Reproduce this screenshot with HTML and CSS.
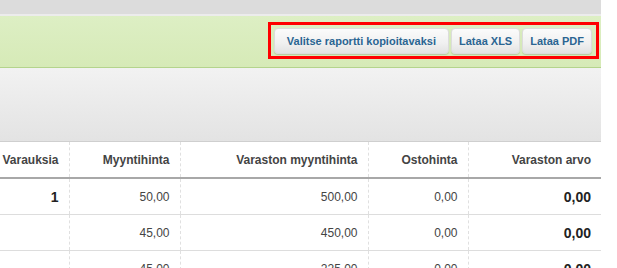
FILE: index.html
```html
<!DOCTYPE html>
<html>
<head>
<meta charset="utf-8">
<link rel="stylesheet" href="styles.css">
</head>
<body>
<div class="page">
  <div class="topbar"></div>
  <div class="toolbar">
    <div class="highlight">
      <button class="btn btn-wide">Valitse raportti kopioitavaksi</button>
      <button class="btn">Lataa XLS</button>
      <button class="btn">Lataa PDF</button>
    </div>
  </div>
  <div class="filterbar"></div>
  <table class="report">
    <colgroup>
      <col class="c1"><col class="c2"><col class="c3"><col class="c4"><col class="c5">
    </colgroup>
    <thead>
      <tr><th>Varauksia</th><th>Myyntihinta</th><th>Varaston myyntihinta</th><th>Ostohinta</th><th>Varaston arvo</th></tr>
    </thead>
    <tbody>
      <tr><td class="strong">1</td><td>50,00</td><td>500,00</td><td>0,00</td><td class="strong">0,00</td></tr>
      <tr><td class="strong"></td><td>45,00</td><td>450,00</td><td>0,00</td><td class="strong">0,00</td></tr>
      <tr><td class="strong"></td><td>45,00</td><td>225,00</td><td>0,00</td><td class="strong">0,00</td></tr>
    </tbody>
  </table>
</div>
</body>
</html>
```
FILE: styles.css
```css
html, body {
  margin: 0;
  padding: 0;
  background: #ffffff;
  overflow: hidden;
}
body {
  font-family: "Liberation Sans", Arial, sans-serif;
  font-size: 12px;
}
.page {
  width: 601px;
}
.topbar {
  height: 14px;
  background: #dcdcdc;
  border-bottom: 2px solid #ececec;
}
.toolbar {
  height: 52px;
  box-sizing: border-box;
  background: linear-gradient(#ddefc4, #d6eab7);
  border-bottom: 1px solid #b4d48c;
  display: flex;
  justify-content: flex-end;
  align-items: flex-start;
  padding: 6px 2px 0 0;
}
.highlight {
  display: flex;
  gap: 2px;
  border: 3px solid #ff0000;
  padding: 3px 4px 2px 3px;
}
.btn {
  font-family: "Liberation Sans", Arial, sans-serif;
  font-size: 11px;
  font-weight: bold;
  color: #2a6592;
  height: 26px;
  padding: 0 7px;
  border: 1px solid #dcdcdc;
  border-radius: 4px;
  background: linear-gradient(#fbfbfb, #f0f0f0 60%, #e2e2e2);
  box-shadow: 0 1px 1px rgba(0, 0, 0, 0.15);
  cursor: pointer;
}
.btn-wide {
  padding: 0 12px;
}
.filterbar {
  height: 73px;
  background: linear-gradient(#f2f2f2, #e3e3e3);
  border-bottom: 1px solid #cfcfcf;
}
.report {
  width: 601px;
  border-collapse: collapse;
  table-layout: fixed;
}
.c1 { width: 69px; }
.c2 { width: 111px; }
.c3 { width: 188px; }
.c4 { width: 100px; }
.c5 { width: 133px; }
.report th {
  height: 35px;
  padding: 0 10px 0 0;
  text-align: right;
  font-weight: bold;
  color: #444444;
  border-bottom: 2px solid #a8a8a8;
  border-left: 1px dashed #e0e0e0;
  white-space: nowrap;
}
.report td {
  height: 35px;
  padding: 0 10px 0 0;
  text-align: right;
  color: #444444;
  border-bottom: 1px solid #dddddd;
  border-left: 1px dashed #e0e0e0;
}
.report th:first-child,
.report td:first-child {
  border-left: none;
}
.report td.strong {
  font-size: 14px;
  font-weight: bold;
  color: #222222;
}
```
